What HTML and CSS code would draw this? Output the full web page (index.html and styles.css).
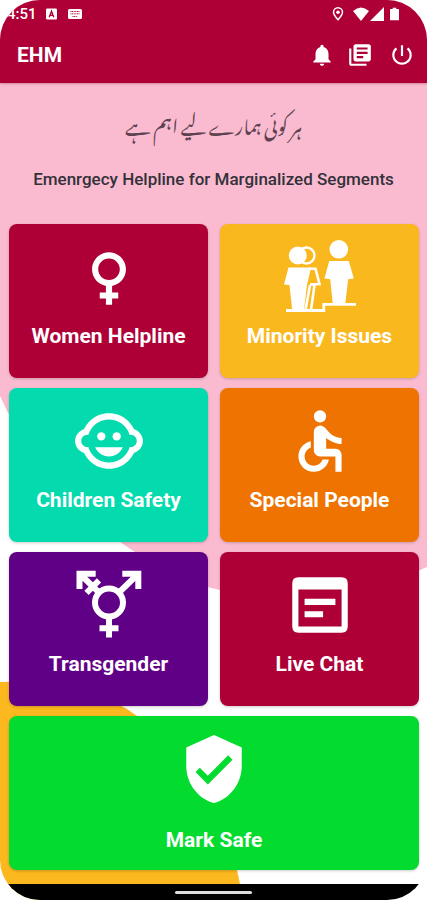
FILE: index.html
```html
<!DOCTYPE html>
<html lang="en">
<head>
<meta charset="utf-8">
<meta name="viewport" content="width=device-width, initial-scale=1">
<title>EHM</title>
<link rel="stylesheet" href="styles.css">
</head>
<body>
<div class="screen">
  <svg class="backdrop" viewBox="0 0 427 900" preserveAspectRatio="none" aria-hidden="true">
    <path fill="#fabbd0" d="M0 0H427V567Q320 616 211 588Q166 574 126 546Q42 490 0 396Z"/>
    <path fill="#fbb81f" d="M0 682Q74 680 127 709Q218 768 240 884V900H0Z"/>
  </svg>

  <header class="top">
    <div class="status">
      <span class="time">4:51</span>
      <svg class="status-icon" viewBox="0 0 12 12" aria-hidden="true"><rect width="12" height="12" rx="1.5" fill="#fff"/><path d="M3.5 9.5L6 3l2.500 6.500M4.500 7.500h3" fill="none" stroke="#ae0037" stroke-width="1.500"/></svg>
      <svg class="status-key" viewBox="0 0 14 10" aria-hidden="true"><rect width="14" height="10" rx="1.5" fill="#fff"/><path d="M2.500 2.500h9M2.500 4.800h9M4.500 7.500h5" fill="none" stroke="#ae0037" stroke-dasharray="1 .6"/></svg>
      <span class="spacer"></span>
      <svg class="status-pin" viewBox="0 0 12 14" aria-hidden="true"><path d="M6 12.700C3 9.500 1.500 7.300 1.500 5.300a4.500 4.500 0 0 1 9 0c0 2-1.500 4.200-4.500 7.400z" fill="none" stroke="#fff" stroke-width="1.500"/><circle cx="6" cy="5.300" r="1.800" fill="#fff"/></svg>
      <svg class="status-net" viewBox="0 0 32 14" aria-hidden="true"><path fill="#fff" d="M8 14L0 4Q8-3 16 4ZM31 0v14H17Z"/></svg>
      <svg class="status-bat" viewBox="0 0 10 14" aria-hidden="true"><path fill="#fff" d="M3 0h4v1.500h2q1 0 1 1V13q0 1-1 1H1q-1 0-1-1V2.500q0-1 1-1h2z"/></svg>
    </div>
    <div class="appbar">
      <h1 class="brand">EHM</h1>
      <nav class="actions" aria-label="Actions">
        <button class="action" type="button" aria-label="Notifications"><svg viewBox="0 0 24 24"><path d="M12 22c1.100 0 2-.9 2-2h-4c0 1.100.89 2 2 2zm6-6v-5c0-3.070-1.640-5.640-4.500-6.320V4c0-.83-.67-1.500-1.500-1.500s-1.500.67-1.500 1.500v.68C7.630 5.360 6 7.920 6 11v5l-2 2v1h16v-1l-2-2z"/></svg></button>
        <button class="action" type="button" aria-label="Library"><svg viewBox="0 0 24 24"><path d="M4 6H2v14c0 1.100.9 2 2 2h14v-2H4V6zm16-4H8c-1.100 0-2 .9-2 2v12c0 1.100.9 2 2 2h12c1.100 0 2-.9 2-2V4c0-1.100-.9-2-2-2zm-1 9H9V9h10v2zm-4 4H9v-2h6v2zm4-8H9V5h10v2z"/></svg></button>
        <button class="action action-power" type="button" aria-label="Log out"><svg viewBox="0 0 24 24"><path d="M13 3h-2v10h2V3zm4.830 2.170l-1.420 1.420C17.990 7.860 19 9.810 19 12c0 3.870-3.130 7-7 7s-7-3.130-7-7c0-2.190 1.010-4.140 2.580-5.420L6.170 5.170C4.230 6.820 3 9.260 3 12c0 4.970 4.030 9 9 9s9-4.030 9-9c0-2.740-1.230-5.180-3.170-6.830z"/></svg></button>
      </nav>
    </div>
  </header>

  <section class="intro">
    <p class="urdu" lang="ur" dir="rtl">ہر کوئی ہمارے لیے اہم ہے</p>
    <p class="tagline">Emenrgecy Helpline for Marginalized Segments</p>
  </section>

  <main class="grid">
    <button class="card crimson" type="button">
      <svg class="icon" viewBox="0 0 24 24" aria-hidden="true"><path d="M17.500 9.500C17.500 6.460 15.040 4 12 4S6.500 6.460 6.500 9.500c0 2.700 1.940 4.930 4.500 5.400V17H9v2h2v2h2v-2h2v-2h-2v-2.100c2.560-.47 4.500-2.700 4.500-5.400zm-9 0C8.500 7.570 10.070 6 12 6s3.500 1.570 3.500 3.500S13.930 13 12 13s-3.500-1.570-3.500-3.500z"/></svg>
      <span>Women Helpline</span>
    </button>
    <button class="card amber" type="button">
      <svg class="icon" viewBox="0 0 74 74" aria-hidden="true">
        <circle cx="23.500" cy="15.500" r="8" fill="none" stroke="#fff" stroke-width="2.400"/>
        <circle cx="14.800" cy="15.500" r="9"/>
        <circle cx="55.800" cy="9.300" r="9.300"/>
        <path d="M5.500 27.500H28L24 45 21 70H9.200L6.500 45 1 44.500Z"/>
        <path d="M26 28.700H32.500L36.500 44 27 44.500M31.500 45L28 70M27 45L22.500 70" fill="none" stroke="#fff" stroke-width="2.600"/>
        <path d="M46.200 21H65.800L70.800 38.500 65.200 39.300 62.200 64H49.800L47.200 39.300 41.500 38.500Z"/>
        <path d="M3 70.500H40.800V64.300H73" fill="none" stroke="#fff" stroke-width="2.800"/>
      </svg>
      <span>Minority Issues</span>
    </button>
    <button class="card teal" type="button">
      <svg class="icon" viewBox="0 0 24 24" aria-hidden="true"><circle cx="14.500" cy="10.500" r="1.350"/><circle cx="9.500" cy="10.500" r="1.350"/><path d="M22.940 12.660c.04-.21.06-.43.06-.66s-.02-.45-.06-.66c-.25-1.510-1.360-2.740-2.810-3.170-.53-1.120-1.280-2.100-2.190-2.910C16.360 3.850 14.280 3 12 3s-4.360.85-5.940 2.260c-.92.81-1.670 1.800-2.190 2.910-1.450.43-2.560 1.650-2.810 3.170-.04.21-.06.43-.06.66s.02.45.06.66c.25 1.510 1.360 2.740 2.810 3.170.52 1.110 1.270 2.090 2.170 2.890C7.620 20.140 9.710 21 12 21s4.380-.86 5.970-2.280c.9-.8 1.650-1.790 2.170-2.890 1.440-.43 2.550-1.650 2.800-3.170zM19 14c-.1 0-.19-.02-.29-.03-.2.67-.49 1.290-.86 1.860C16.600 17.740 14.450 19 12 19s-4.600-1.260-5.850-3.170c-.37-.57-.66-1.190-.86-1.860-.1.010-.19.030-.29.030-1.100 0-2-.9-2-2s.9-2 2-2c.1 0 .19.020.29.030.2-.67.49-1.290.86-1.860C7.400 6.260 9.550 5 12 5s4.600 1.260 5.850 3.170c.37.57.66 1.190.86 1.860.1-.01.190-.03.290-.03 1.100 0 2 .9 2 2s-.9 2-2 2zM7.500 14c.76 1.770 2.490 3 4.500 3s3.740-1.230 4.500-3h-9z"/></svg>
      <span>Children Safety</span>
    </button>
    <button class="card orange" type="button">
      <svg class="icon" viewBox="0 0 24 24" aria-hidden="true"><circle cx="12" cy="4" r="2"/><path d="M19 13v-2c-1.540.02-3.090-.75-4.070-1.830l-1.290-1.430c-.17-.19-.38-.34-.61-.45-.01 0-.01-.01-.02-.01H13c-.35-.2-.75-.3-1.190-.26C10.760 7.110 10 8.040 10 9.090V15c0 1.100.9 2 2 2h5v5h2v-5.500c0-1.100-.9-2-2-2h-3v-3.450c1.290 1.070 3.250 1.940 5 1.950zm-6.170 5c-.41 1.160-1.520 2-2.830 2-1.660 0-3-1.340-3-3 0-1.310.84-2.410 2-2.830V12.100c-2.280.46-4 2.480-4 4.900 0 2.760 2.240 5 5 5 2.420 0 4.440-1.720 4.900-4h-2.070z"/></svg>
      <span>Special People</span>
    </button>
    <button class="card purple" type="button">
      <svg class="icon" viewBox="0 0 74 74" aria-hidden="true"><g fill="none" stroke="#fff" stroke-width="6"><circle cx="37" cy="34.500" r="14"/><path d="M37 48V69.500M27.500 60.300H46.500M47 24.500L65 7M50.300 5.700H66.300V21M27 24.500L9 7M23.700 5.700H7.500V21M14.500 24.800L27 12.300"/></g></svg>
      <span>Transgender</span>
    </button>
    <button class="card crimson" type="button">
      <svg class="icon" viewBox="0 0 24 24" aria-hidden="true"><path fill-rule="evenodd" d="M5 3H19Q21 3 21 5V19Q21 21 19 21H5Q3 21 3 19V5Q3 3 5 3ZM5 7V19H19V7ZM7 10H17V12H7ZM7 14H13V16H7Z"/></svg>
      <span>Live Chat</span>
    </button>
    <button class="card green wide" type="button">
      <svg class="icon" viewBox="0 0 24 24" aria-hidden="true"><path d="M12 1L3 5v6c0 5.550 3.840 10.740 9 12 5.160-1.260 9-6.450 9-12V5l-9-4zm-2 16l-4-4 1.410-1.410L10 14.170l6.590-6.590L18 9l-8 8z"/></svg>
      <span>Mark Safe</span>
    </button>
  </main>

  <footer class="navbar"><span class="handle"></span></footer>
</div>
</body>
</html>
```
FILE: styles.css
```css
* { box-sizing: border-box; }

body {
  margin: 0;
  background: #fff;
  font-family: Roboto, "Liberation Sans", sans-serif;
}

h1, p { margin: 0; }

button {
  border: 0;
  padding: 0;
  background: none;
  color: inherit;
  font: inherit;
  cursor: pointer;
}

svg { display: block; }

.screen {
  position: relative;
  isolation: isolate;
  display: flex;
  flex-direction: column;
  min-height: 100vh;
  overflow: hidden;
  border-radius: 40px;
  background: #fff;
}

.backdrop {
  position: absolute;
  inset: 0;
  z-index: -1;
  width: 100%;
  height: 100%;
}

.top {
  background: #ae0037;
  color: #fff;
  box-shadow: 0 1px 2px rgba(120, 0, 40, 0.3);
}

.status {
  display: flex;
  align-items: center;
  height: 27px;
  padding: 0 28px 0 7px;
}

.time {
  font-size: 15px;
  font-weight: 500;
  margin-right: 9px;
}

.status-icon { width: 11px; height: 12px; }
.status-key { width: 14px; height: 10px; margin-left: 11px; }
.spacer { flex: 1; }
.status-pin { width: 12px; height: 14px; margin-right: 9px; }
.status-net { width: 32px; height: 14px; margin-right: 5px; }
.status-bat { width: 9px; height: 14px; }

.appbar {
  display: flex;
  align-items: center;
  justify-content: space-between;
  height: 56px;
  padding: 0 12px 0 17px;
}

.brand {
  font-size: 21px;
  line-height: 28px;
  font-weight: 700;
}

.actions { display: flex; gap: 12px; }
.action svg { width: 26px; height: 26px; fill: #fff; }
.action-power { margin-left: 4px; }

.intro {
  display: flex;
  flex-direction: column;
  align-items: center;
  gap: 28px;
  padding: 24px 8px 32px;
  text-align: center;
}

.urdu {
  font-family: "Noto Nastaliq Urdu", "DejaVu Sans", sans-serif;
  font-size: 19px;
  line-height: 32px;
  color: #5d4250;
}

.tagline {
  font-size: 17px;
  line-height: 25px;
  font-weight: 500;
  color: #33313a;
}

.grid {
  display: grid;
  grid-template-columns: 1fr 1fr;
  gap: 10px 12px;
  padding: 0 8px 14px 9px;
}

.card {
  display: flex;
  flex-direction: column;
  align-items: center;
  min-height: 154px;
  padding: 16px 4px;
  border-radius: 8px;
  box-shadow: 0 1px 3px rgba(0, 0, 0, 0.2);
  color: #fff;
  font-size: 21px;
  line-height: 28px;
  font-weight: 700;
}

.card span { margin-top: 8px; }
.icon { width: 74px; height: 74px; fill: #fff; }

.wide { grid-column: 1 / -1; }
.wide span { margin-top: 20px; }

.crimson { background: #ae0037; }
.amber { background: #fab81f; }
.teal { background: #03daae; }
.orange { background: #ee7300; }
.purple { background: #600087; }
.green { background: #03db2f; }

.navbar {
  display: flex;
  justify-content: center;
  align-items: center;
  height: 16px;
  margin-top: auto;
  background: #000;
}

.handle {
  width: 18%;
  height: 3px;
  border-radius: 2px;
  background: #ddd;
}
```
